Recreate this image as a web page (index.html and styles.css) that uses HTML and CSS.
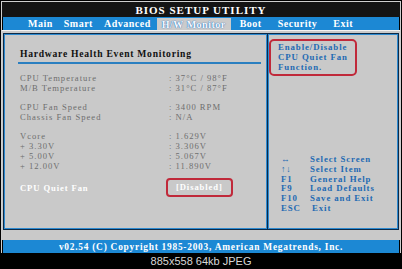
FILE: index.html
```html
<!DOCTYPE html>
<html>
<head>
<meta charset="utf-8">
<link rel="stylesheet" href="styles.css">
</head>
<body>
<div class="screen">
  <div class="bezel">
    <div class="title">BIOS SETUP UTILITY</div>
    <div class="menu">
      <span class="menu-item">Main</span>
      <span class="menu-item">Smart</span>
      <span class="menu-item">Advanced</span>
      <span class="menu-item menu-item--active">H/W Monitor</span>
      <span class="menu-item menu-item--wide">Boot</span>
      <span class="menu-item menu-item--wide">Security</span>
      <span class="menu-item menu-item--wide">Exit</span>
    </div>
    <div class="body">
      <div class="panel panel--main">
        <div class="heading">Hardware Health Event Monitoring</div>
        <div class="group group--first">
          <span class="label">CPU Temperature</span><span class="value">: 37°C / 98°F</span>
          <span class="label">M/B Temperature</span><span class="value">: 31°C / 87°F</span>
        </div>
        <div class="group">
          <span class="label">CPU Fan Speed</span><span class="value">: 3400 RPM</span>
          <span class="label">Chassis Fan Speed</span><span class="value">: N/A</span>
        </div>
        <div class="group">
          <span class="label">Vcore</span><span class="value">: 1.629V</span>
          <span class="label">+ 3.30V</span><span class="value">: 3.306V</span>
          <span class="label">+ 5.00V</span><span class="value">: 5.067V</span>
          <span class="label">+ 12.00V</span><span class="value">: 11.890V</span>
        </div>
        <div class="group group--option">
          <span class="label label--option">CPU Quiet Fan</span><span class="option-box">[Disabled]</span>
        </div>
      </div>
      <div class="panel panel--help">
        <div class="help-box">Enable/Disable<br>CPU Quiet Fan<br>Function.</div>
        <div class="keys">
          <span class="key">↔</span><span>Select Screen</span>
          <span class="key">↑↓</span><span>Select Item</span>
          <span class="key">F1</span><span>General Help</span>
          <span class="key">F9</span><span>Load Defaults</span>
          <span class="key">F10</span><span>Save and Exit</span>
          <span class="key">ESC</span><span class="key-exit">Exit</span>
        </div>
      </div>
    </div>
    <div class="footer">v02.54 (C) Copyright 1985-2003, American Megatrends, Inc.</div>
  </div>
</div>
<div class="caption">885x558 64kb JPEG</div>
</body>
</html>
```
FILE: styles.css
```css
html, body {
  margin: 0;
  padding: 0;
  background: #000;
}
body {
  width: 402px;
  height: 269px;
  overflow: hidden;
  font-family: "Liberation Serif", "DejaVu Serif", serif;
}
.screen {
  height: 253px;
  box-sizing: border-box;
  padding: 1px;
  background: #000;
}
.bezel {
  height: 252px;
  box-sizing: border-box;
  border: 1px solid #cfcfcf;
  border-bottom: 0;
  display: flex;
  flex-direction: column;
}
.title {
  height: 15px;
  line-height: 16px;
  text-align: center;
  color: #fff;
  font-weight: bold;
  font-size: 11px;
  letter-spacing: 1px;
  background: #141414;
}
.menu {
  height: 13px;
  margin: 0 1px;
  background: #1c88d4;
  display: flex;
  align-items: stretch;
  padding-left: 20px;
  gap: 1px;
}
.menu-item {
  padding: 0 5px;
  color: #fff;
  font-weight: bold;
  font-size: 10px;
  letter-spacing: 0.5px;
  line-height: 14px;
}
.menu-item--active {
  background: #cbcbcb;
  color: #f6f8fc;
  margin-top: 1px;
  line-height: 13px;
  text-shadow: 0 0 1px #2f78c0, 0 0 1px #2f78c0;
}
.menu-item--wide {
  padding: 0 7px 0 8px;
}
.body {
  flex: 1;
  background: #c9c9c9;
  border-top: 1px solid #f2f2f2;
  padding: 2px 1px 9px 1px;
  display: flex;
}
.panel {
  height: 197px;
  box-sizing: border-box;
  border: 1px solid #0c2a48;
  box-shadow: inset 0 0 0 1px #2d8ad0;
}
.panel--main {
  width: 265px;
  padding: 14px 6px 0 16px;
}
.panel--help {
  flex: 1;
  padding: 5px 0 0 1px;
  margin-left: -1px;
}
.heading {
  font-size: 9.6px;
  font-weight: bold;
  letter-spacing: 0.75px;
  color: #111;
  line-height: 12px;
  padding: 0 0 2px 2px;
  margin-left: -2px;
  border-bottom: 2px solid #2a7fc0;
}
.group {
  display: grid;
  grid-template-columns: 149px auto;
  line-height: 10px;
  font-size: 8.6px;
  letter-spacing: 1px;
  color: #6e6e6e;
  margin-top: 9px;
}
.group--option {
  margin-top: 7px;
  align-items: center;
}
.label--option {
  color: #fff;
  font-weight: bold;
  letter-spacing: 0.9px;
}
.option-box {
  justify-self: start;
  margin-left: -3px;
  border: 2px solid #c0293a;
  border-radius: 4px;
  padding: 0 8px 0 8px;
  line-height: 15px;
  color: #fff;
  font-weight: bold;
  letter-spacing: 0.9px;
}
.help-box {
  width: 88px;
  box-sizing: border-box;
  border: 2px solid #c0293a;
  border-radius: 5px;
  padding: 1px 0 2px 7px;
  line-height: 10px;
  font-size: 8.8px;
  font-weight: bold;
  letter-spacing: 0.9px;
  color: #1e6ab3;
}
.keys {
  margin-top: 79px;
  padding-left: 12px;
  display: grid;
  grid-template-columns: 29px auto;
  line-height: 9.8px;
  font-size: 8.8px;
  font-weight: bold;
  letter-spacing: 0.9px;
  color: #1e6ab3;
}
.key-exit {
  padding-left: 2px;
}
.footer {
  height: 13px;
  margin: 0 1px;
  background: #1c88d4;
  color: #fff;
  text-align: center;
  font-weight: bold;
  font-size: 9.4px;
  letter-spacing: 0.75px;
  line-height: 14px;
}
.caption {
  height: 16px;
  line-height: 17px;
  text-align: center;
  color: #d8d8d8;
  font-family: "Liberation Sans", Arial, sans-serif;
  font-size: 11px;
}
```
